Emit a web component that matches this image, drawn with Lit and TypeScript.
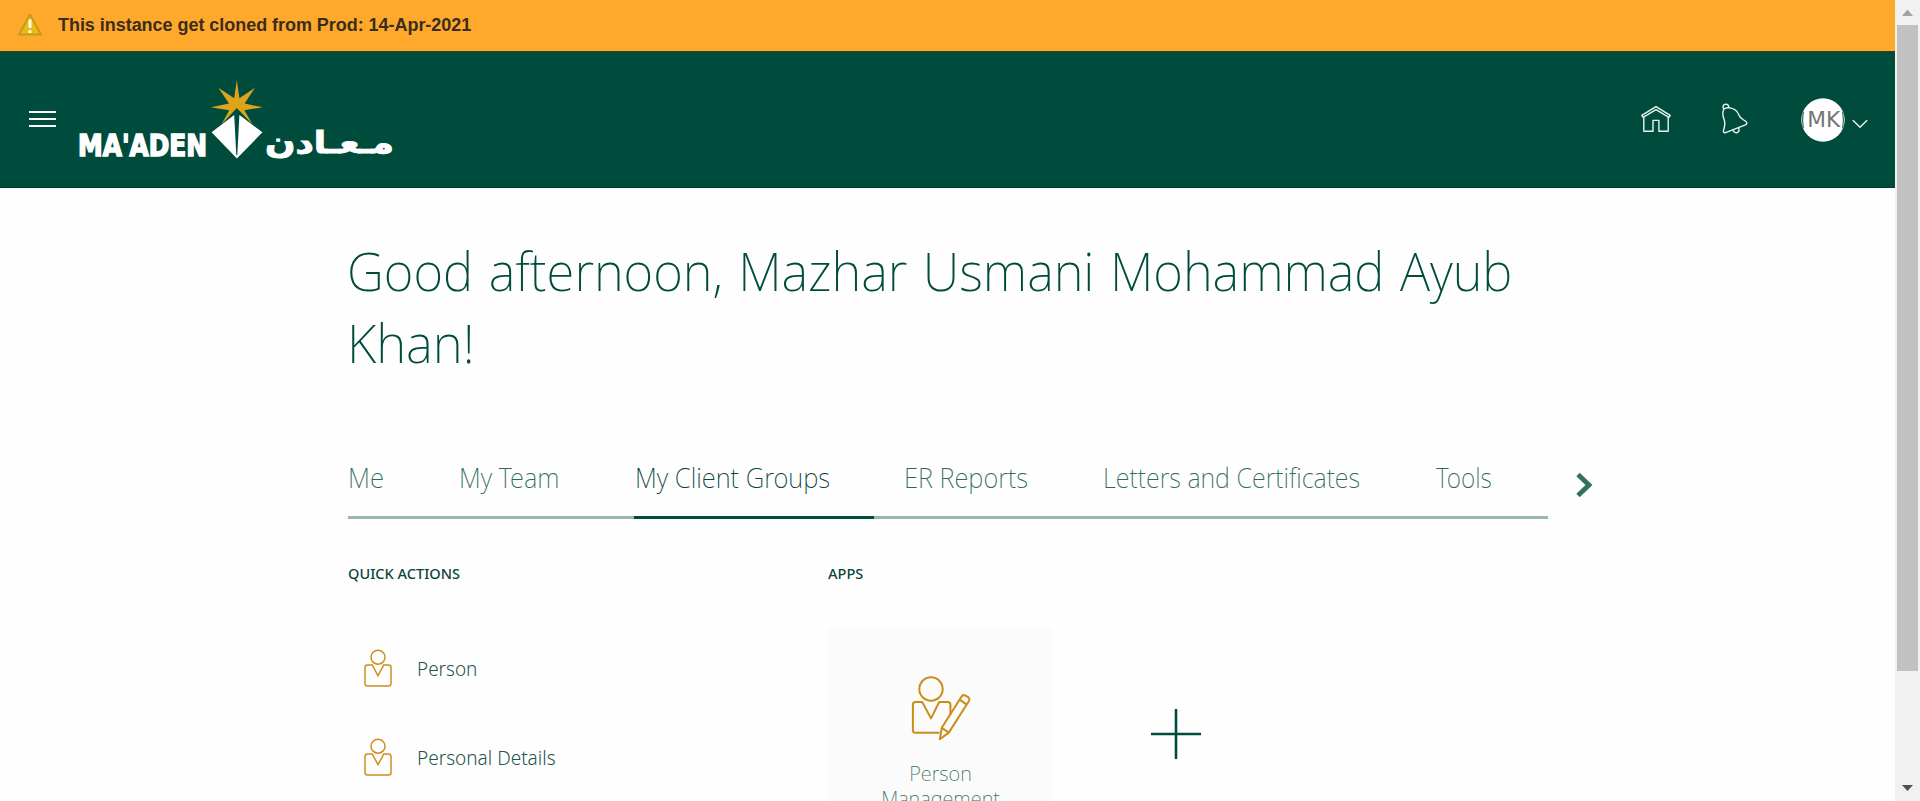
import { LitElement, html, css, svg } from "lit";
import { customElement } from "lit/decorators.js";
import { classMap } from "lit/directives/class-map.js";
import { styleMap } from "lit/directives/style-map.js";

interface Tab { label: string; width: number; fit: number; }

const TABS: Tab[] = [
  { label: "Me", width: 111.5, fit: 0.955 },
  { label: "My Team", width: 175.8, fit: 0.945 },
  { label: "My Client Groups", width: 269.5, fit: 0.948 },
  { label: "ER Reports", width: 198.9, fit: 0.943 },
  { label: "Letters and Certificates", width: 332.8, fit: 0.93 },
  { label: "Tools", width: 112, fit: 0.905 },
];

const ACTIONS = [
  { label: "Person", fit: 0.945 },
  { label: "Personal Details", fit: 0.95 },
];

const fitted = (text: string, fit: number) =>
  html`<span class="fit" style=${styleMap({ transform: `scaleX(${fit})` })}>${text}</span>`;

@customElement("clone-banner")
export class CloneBanner extends LitElement {
  static styles = css`
    :host { display: flex; align-items: center; height: 51px; padding: 0 0 2px 17px; box-sizing: border-box;
      background: #ffa92c; color: #3b2d1c; font: bold 18px/24px "Liberation Sans", Arial, sans-serif; }
    .icon { width: 26px; height: 24px; margin-right: 15px; flex: none; }
    .msg { letter-spacing: -0.04px; white-space: nowrap; }
  `;
  render() {
    return html`
      <svg class="icon" viewBox="0 0 26 24">
        <path d="M13 1.6 24 21.6H2Z" fill="#eab818" stroke="#c79a1c" stroke-width="2" stroke-linejoin="round"/>
        <path d="M13 6.5v8.6M13 17.2v2.8" stroke="#fffbe0" stroke-width="3"/>
      </svg>
      <span class="msg">This instance get cloned from Prod: 14-Apr-2021</span>`;
  }
}

@customElement("brand-logo")
export class BrandLogo extends LitElement {
  static styles = css`
    :host { display: block; width: 318px; height: 86px; }
    .art { display: block; width: 318px; height: 86px; }
    .word { font-family: "DejaVu Sans Condensed", "DejaVu Sans", sans-serif; font-weight: 700; fill: #fff;
      stroke: #fff; stroke-width: 1.5px; }
    .latin { font-size: 30px; font-stretch: condensed; }
    .arabic { font-size: 30px; stroke-width: 0.9px; }
  `;
  render() {
    return html`
      <svg class="art" viewBox="78 77 318 86">
        <text class="word latin" x="78" y="155.6" textLength="129" lengthAdjust="spacingAndGlyphs">MA'ADEN</text>
        ${svg`
        <path fill="#dca41b" d="M236.8 80 239.4 98.3 255 87.7 244.6 103.6 262.8 107.3 244.4 110.2 252.4 124.2 236.8 107.9
          221.6 124.2 229.2 110.2 210.8 107.3 229 103.6 218.4 87.7 234.2 98.3Z"/>
        <path fill="#fff" d="M211.6 132.3 234.2 115 236.3 155 237.3 155 239.4 115 262.4 132.3 236.9 158.6Z"/>`}
        <text class="word arabic" x="265" y="153" direction="ltr" textLength="129" lengthAdjust="spacingAndGlyphs">مـعـادن</text>
      </svg>`;
  }
}

@customElement("global-header")
export class GlobalHeader extends LitElement {
  static styles = css`
    :host { display: flex; align-items: flex-start; height: 137px; box-sizing: border-box; background: #004c3c;
      border-top: 1px solid #2c431f; border-bottom: 1px solid #003e31; padding: 0 27px 0 29px; }
    .menu { display: flex; flex-direction: column; gap: 5px; width: 27px; margin-top: 59px; }
    .bar { height: 2px; background: #fff; }
    .logo { margin: 25px 0 0 22px; }
    .tools { display: flex; margin-left: auto; }
    .home { width: 30px; height: 28px; margin: 53px 0 0; }
    .bell { width: 28px; height: 32px; margin: 51px 0 0 50px; }
    .line { fill: none; stroke: #e9f3ef; stroke-width: 1.4; stroke-linejoin: round; stroke-linecap: round; }
    .avatar { width: 44px; height: 44px; margin: 46px 0 0 52px; }
    .initials { font: 20.5px "DejaVu Sans", sans-serif; fill: #757575; }
    .caret { width: 16px; height: 10px; margin: 67px 0 0 7px; }
  `;
  render() {
    return html`
      <div class="menu"><div class="bar"></div><div class="bar"></div><div class="bar"></div></div>
      <brand-logo class="logo"></brand-logo>
      <div class="tools">
        <svg class="home" viewBox="0 0 30 28">
          <path class="line" d="M.8 10.4 15 1.6 29.2 10.4 27.9 12.3 15 4.7 2.1 12.3ZM2.8 12.2V26.2H12V15.4H17.9V26.2H27.2V12.2"/>
        </svg>
        <svg class="bell" viewBox="0 0 28 32">
          <path class="line" d="M3 6.2C.8 3.6 2.6 1 5.2 1.2 7.6 1.4 8 3.6 7.4 4.8M3 6.2C4 4.8 6 4.4 9 4.9 13.5 5.7 16.6 8.4 18 12.3 19.2 15.6 22 16.4 24.6 18.2 26.4 19.6 26 21.2 24.4 21.9L4.6 29.7C2.8 30 2 28.8 2.6 27.2 3.6 23.8 4.6 20.6 3.2 16.8 1.6 12.8 1.2 9 3 6.2ZM12 27C12.8 29.4 15 30.4 16.6 29.4 18.2 28.4 18.2 26.4 17.6 25"/>
        </svg>
        <svg class="avatar" viewBox="0 0 44 44">
          <circle cx="22" cy="22" r="21.7" fill="#fff"/>
          <path d="M2.3 13.6Q.9 22 2.3 30.4M41.7 13.6Q43.1 22 41.7 30.4" fill="none" stroke="#21604f" stroke-width="1.1"/>
          <text class="initials" x="6.2" y="29.2" textLength="33" lengthAdjust="spacingAndGlyphs">MK</text>
        </svg>
        <svg class="caret" viewBox="0 0 16 10"><path class="line" d="M1.2 1.6 8 8.2 14.8 1.6"/></svg>
      </div>`;
  }
}

const personShape = svg`<circle cx="14" cy="8.2" r="7"/>
  <path d="M8.2 16H3.6Q1 16 1 18.6V34.6Q1 37 3.4 37H24.6Q27 37 27 34.6V18.6Q27 16 24.4 16H19.8L14 26.6Z"/>`;

@customElement("quick-actions")
export class QuickActions extends LitElement {
  static styles = css`
    :host { display: block; }
    .title { margin: 0 0 0 -0.5px; font-size: 15px; line-height: 20px; font-weight: 500; color: #0b4539; }
    .list { display: flex; flex-direction: column; gap: 50.6px; padding: 66px 0 0 16px; }
    .item { display: flex; height: 38px; align-items: center; color: #23554e; font-size: 20px; font-weight: 300; }
    .icon { width: 28px; height: 38px; margin-right: 25px; fill: none; stroke: #cc8f1c; stroke-width: 1.5; }
    .fit { display: inline-block; transform-origin: 0 0; white-space: nowrap; }
    .label { padding-top: 1.8px; }
  `;
  render() {
    return html`
      <h2 class="title">${fitted("QUICK ACTIONS", 0.97)}</h2>
      <div class="list">
        ${ACTIONS.map(a => html`<div class="item">
          <svg class="icon" viewBox="0 0 28 38">${personShape}</svg>
          <span class="label">${fitted(a.label, a.fit)}</span></div>`)}
      </div>`;
  }
}

@customElement("app-tiles")
export class AppTiles extends LitElement {
  static styles = css`
    :host { display: block; }
    .title { margin: 0; font-size: 15px; line-height: 20px; font-weight: 500; color: #0b4539; }
    .fit { display: inline-block; transform-origin: 0 0; white-space: nowrap; }
    .tiles { display: flex; padding-top: 45px; gap: 10px; }
    .tile { width: 225px; height: 225px; box-sizing: border-box; display: flex; flex-direction: column; align-items: center;
      padding-top: 46.5px; background: #fbfbfb; color: #37705f; font-size: 20px; line-height: 25px; font-weight: 250; text-align: center; }
    .icon { width: 62px; height: 68px; margin: 0 0 18.5px; fill: none; stroke: #cb8d17; stroke-width: 2; stroke-linejoin: round; }
    .add { width: 225px; display: flex; justify-content: center; padding-top: 81px; }
    .plus { width: 50px; height: 50px; stroke: #004c3c; stroke-width: 2.6; }
  `;
  render() {
    return html`
      <h2 class="title">${fitted("APPS", 0.97)}</h2>
      <div class="tiles">
        <div class="tile">
          <svg class="icon" viewBox="0 0 62 68">
            <circle cx="21" cy="14" r="11.7"/>
            <path d="M29.5 57.7H5.4Q2.9 57.7 2.9 55.2V29.6Q2.9 27 5.5 27H12.2L21 43.4 29.2 27H37.8Q40.4 27 40.4 29.6V40"/>
            <path d="M29.8 64.2 31.8 52.8 51.4 21.8Q53 19.2 55.4 20.6L58 22.2Q60.4 23.8 58.8 26.2L38.8 57.6ZM31.8 52.8 38.8 57.6M50.2 25.2 56.8 29.6"/>
          </svg>
          <div>Person<br>Management</div>
        </div>
        <div class="add"><svg class="plus" viewBox="0 0 50 50"><path d="M25 0V50M0 25H50"/></svg></div>
      </div>`;
  }
}

@customElement("app-root")
export class AppRoot extends LitElement {
  static styles = css`
    :host { display: grid; grid-template-columns: 1895px 25px; height: 801px; overflow: hidden; background: #fefefe;
      font-family: "Noto Sans", "Open Sans", sans-serif; }
    .page { height: 801px; overflow: hidden; }
    .content { padding: 46px 0 0 348px; }
    .hello { margin: 0 0 0 -1px; height: 144px; font-size: 54px; line-height: 72px; font-weight: 215; color: #004c3c;
      word-spacing: 2.4px; }
    .fit { display: inline-block; transform-origin: 0 0; white-space: nowrap; }
    .nav { display: flex; margin-top: 82px; }
    .tabs { position: relative; width: 1200px; height: 59px; box-sizing: border-box; border-bottom: 3px solid #99b7ad; }
    .row { display: flex; margin-left: -0.5px; }
    .tab { flex: none; font-size: 27px; line-height: 36px; font-weight: 200; color: #2f6a59; }
    .tab.active { color: #0a4337; }
    .marker { position: absolute; left: 286px; bottom: -3px; width: 240px; height: 3px; background: #004c3c; }
    .next { width: 18px; height: 26px; margin: 12px 0 0 27px; fill: none; stroke: #34705f; stroke-width: 4.8; }
    .cols { display: grid; grid-template-columns: 480px 1fr; padding-top: 44px; }
    .scroll { display: flex; flex-direction: column; align-items: center; background: #f1f1f1; height: 801px; }
    .thumb { width: 21px; height: 646px; margin-left: -1px; background: #c1c1c1; }
    .up { width: 25px; height: 25px; fill: #a3a3a3; }
    .down { width: 25px; height: 25px; margin-top: auto; fill: #505050; }
  `;
  render() {
    return html`
      <main class="page">
        <clone-banner></clone-banner>
        <global-header></global-header>
        <div class="content">
          <h1 class="hello">${fitted("Good afternoon, Mazhar Usmani Mohammad Ayub", 0.944)}<br>${fitted("Khan!", 0.95)}</h1>
          <div class="nav">
            <div class="tabs">
              <div class="row">
                ${TABS.map(t => html`<div class=${classMap({ tab: true, active: t.label === "My Client Groups" })}
                  style=${styleMap({ width: `${t.width}px` })}>${fitted(t.label, t.fit)}</div>`)}
              </div>
              <div class="marker"></div>
            </div>
            <svg class="next" viewBox="0 0 18 26"><path d="M3 2.4 14 13 3 23.6"/></svg>
          </div>
          <div class="cols">
            <quick-actions></quick-actions>
            <app-tiles></app-tiles>
          </div>
        </div>
      </main>
      <div class="scroll">
        <svg class="up" viewBox="0 0 25 25"><path d="M12.5 9.5 18 16H7Z"/></svg>
        <div class="thumb"></div>
        <svg class="down" viewBox="0 0 25 25"><path d="M7 9H18L12.5 15Z"/></svg>
      </div>`;
  }
}
